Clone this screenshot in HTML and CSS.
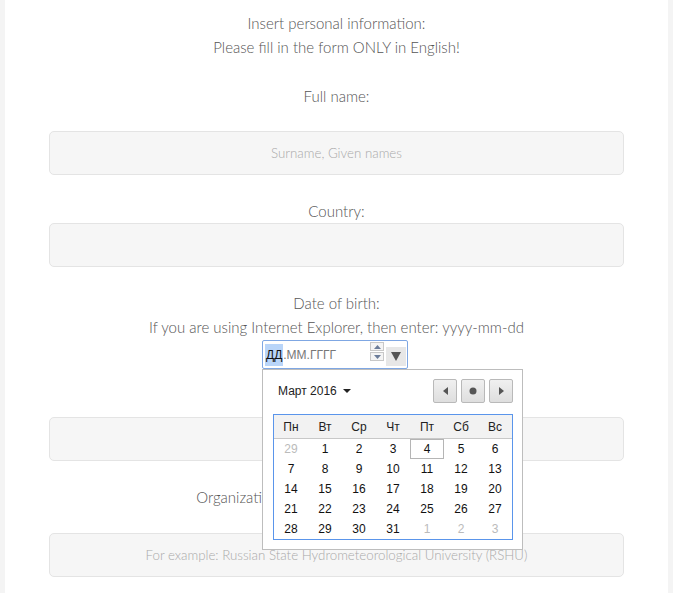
FILE: index.html
```html
<!DOCTYPE html>
<html>
<head>
<meta charset="utf-8">
<link rel="stylesheet" href="styles.css">
</head>
<body>
<div class="page">
  <div class="form">
    <div class="intro">
      <p>Insert personal information:</p>
      <p>Please fill in the form ONLY in English!</p>
    </div>
    <div class="lbl lbl-name">Full name:</div>
    <input class="field f1" type="text" placeholder="Surname, Given names">
    <div class="lbl lbl-country">Country:</div>
    <input class="field f2" type="text">
    <div class="lbl lbl-date">Date of birth:</div>
    <div class="lbl">If you are using Internet Explorer, then enter: yyyy-mm-dd</div>
    <div class="date-wrap">
      <div class="date-box">
        <span class="seg sel">ДД</span><span class="seg">.ММ.ГГГГ</span>
        <span class="spin">
          <span class="spin-btn"><svg width="7" height="4" viewBox="0 0 7 4"><path d="M0 4 L3.5 0 L7 4Z" fill="#6b7c99"/></svg></span>
          <span class="spin-btn"><svg width="7" height="4" viewBox="0 0 7 4"><path d="M0 0 L3.5 4 L7 0Z" fill="#6b7c99"/></svg></span>
        </span>
        <span class="drop"><svg width="10" height="9" viewBox="0 0 10 9"><path d="M0 0 L10 0 L5 9Z" fill="#555"/></svg></span>
      </div>
      <div class="cal">
        <div class="cal-head">
          <div class="month">Март 2016 <svg width="8" height="4" viewBox="0 0 8 4"><path d="M0 0 L8 0 L4 4Z" fill="#222"/></svg></div>
          <div class="navs">
            <span class="nav"><svg width="5" height="8" viewBox="0 0 5 8"><path d="M5 0 L0 4 L5 8Z" fill="#555"/></svg></span>
            <span class="nav"><svg width="8" height="8" viewBox="0 0 8 8"><circle cx="4" cy="4" r="3.5" fill="#555"/></svg></span>
            <span class="nav"><svg width="5" height="8" viewBox="0 0 5 8"><path d="M0 0 L5 4 L0 8Z" fill="#555"/></svg></span>
          </div>
        </div>
        <div class="grid">
          <div class="wd">Пн</div><div class="wd">Вт</div><div class="wd">Ср</div><div class="wd">Чт</div><div class="wd">Пт</div><div class="wd">Сб</div><div class="wd">Вс</div>
          <div class="d o">29</div><div class="d">1</div><div class="d">2</div><div class="d">3</div><div class="d today">4</div><div class="d">5</div><div class="d">6</div>
          <div class="d">7</div><div class="d">8</div><div class="d">9</div><div class="d">10</div><div class="d">11</div><div class="d">12</div><div class="d">13</div>
          <div class="d">14</div><div class="d">15</div><div class="d">16</div><div class="d">17</div><div class="d">18</div><div class="d">19</div><div class="d">20</div>
          <div class="d">21</div><div class="d">22</div><div class="d">23</div><div class="d">24</div><div class="d">25</div><div class="d">26</div><div class="d">27</div>
          <div class="d">28</div><div class="d">29</div><div class="d">30</div><div class="d">31</div><div class="d o">1</div><div class="d o">2</div><div class="d o">3</div>
        </div>
      </div>
    </div>
    <input class="field f3" type="text">
    <div class="lbl lbl-org">Organization name (place of work or study):</div>
    <input class="field f4" type="text" placeholder="For example: Russian State Hydrometeorological University (RSHU)">
  </div>
</div>
</body>
</html>
```
FILE: styles.css
```css
html, body {
  margin: 0;
  padding: 0;
}
body {
  background: #f4f4f4;
  font-family: Lato, "Open Sans", sans-serif;
  font-weight: 300;
  color: #555;
}
.page {
  margin-left: 5px;
  width: 663px;
  min-height: 593px;
  background: #fff;
  padding-top: 11px;
  box-sizing: border-box;
  overflow: hidden;
}
.form {
  margin-left: 44px;
  width: 575px;
  display: flex;
  flex-direction: column;
}
.intro {
  text-align: center;
  font-size: 15px;
  line-height: 24px;
}
.intro p {
  margin: 0;
}
.lbl {
  text-align: center;
  font-size: 15px;
  line-height: 24px;
}
.lbl-name { margin-top: 25px; }
.lbl-country { margin-top: 24px; }
.lbl-date { margin-top: 24px; }
.lbl-org { margin-top: 24px; white-space: nowrap; }
.field {
  display: block;
  box-sizing: border-box;
  width: 575px;
  height: 44px;
  margin: 0;
  background: #f6f6f6;
  border: 1px solid #e4e4e4;
  border-radius: 5px;
  text-align: center;
  font-family: Lato, sans-serif;
  font-weight: 300;
  font-size: 13.3px;
  color: #555;
  outline: none;
}
.field::placeholder {
  color: #a9a9a9;
}
.f1 { margin-top: 23px; }
.f2 { margin-top: 0; }
.f3 { margin-top: 48px; }
.f4 { margin-top: 24px; }
.date-wrap {
  position: relative;
  align-self: flex-start;
  margin-top: 1px;
  margin-left: 213px;
  width: 146px;
}
.date-box {
  box-sizing: border-box;
  width: 146px;
  height: 29px;
  border: 1px solid #7fa7e3;
  border-radius: 2px;
  display: flex;
  align-items: center;
  padding-left: 2px;
  font-family: "Liberation Sans", Arial, sans-serif;
  font-weight: 400;
  font-size: 12px;
}
.seg {
  color: #777;
  line-height: 22px;
}
.seg.sel {
  background: #b9d5f9;
  color: #111;
  padding: 0 1px;
}
.spin {
  margin-left: auto;
  display: flex;
  flex-direction: column;
  gap: 1px;
  align-self: flex-start;
  margin-top: 1px;
}
.spin-btn {
  width: 14px;
  height: 9px;
  border: 1px solid #c8c8c8;
  box-sizing: border-box;
  display: flex;
  align-items: center;
  justify-content: center;
  background: #f4f4f4;
}
.drop {
  width: 20px;
  height: 19px;
  margin: 6px 1px 0 2px;
  background: #e7e7e7;
  display: flex;
  align-items: center;
  justify-content: center;
  align-self: flex-start;
}
.cal {
  position: absolute;
  top: 100%;
  left: 0;
  width: 261px;
  box-sizing: border-box;
  background: #fff;
  border: 1px solid #bdbdbd;
  padding: 9px 10px 9px 10px;
  font-family: "Liberation Sans", Arial, sans-serif;
  font-weight: 400;
  color: #222;
  z-index: 2;
}
.cal-head {
  display: flex;
  align-items: center;
  height: 24px;
  margin-bottom: 11px;
}
.month {
  font-size: 12px;
  padding-left: 5px;
  display: flex;
  align-items: center;
  gap: 6px;
}
.navs {
  margin-left: auto;
  margin-right: -1px;
  display: flex;
  gap: 4px;
}
.nav {
  box-sizing: border-box;
  width: 24px;
  height: 24px;
  border: 1px solid #b9b9b9;
  border-radius: 2px;
  background: linear-gradient(#f0f0f0, #dedede);
  display: flex;
  align-items: center;
  justify-content: center;
}
.grid {
  display: grid;
  grid-template-columns: repeat(7, 34px);
  grid-template-rows: 24px repeat(5, 20px);
  border: 1px solid #5a95eb;
  width: 240px;
  box-sizing: border-box;
  font-size: 12px;
}
.wd {
  background: #f2f2f2;
  border-bottom: 1px solid #c8c8c8;
  display: flex;
  align-items: center;
  justify-content: center;
  color: #222;
}
.d {
  display: flex;
  align-items: center;
  justify-content: center;
  color: #111;
}
.d.o {
  color: #bbb;
}
.d.today {
  border: 1px solid #b5b5b5;
  box-sizing: border-box;
}
```
